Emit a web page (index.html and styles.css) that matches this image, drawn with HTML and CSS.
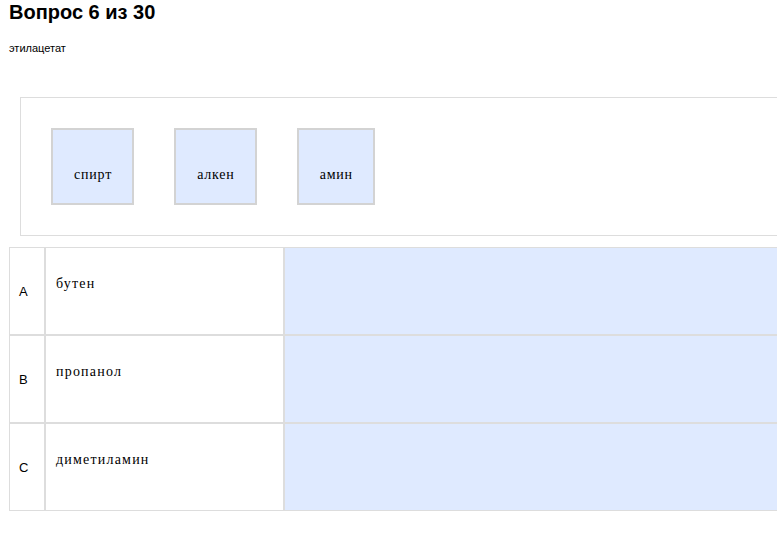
FILE: index.html
```html
<!DOCTYPE html>
<html lang="ru">
<head>
<meta charset="utf-8">
<title>Вопрос 6 из 30</title>
<link rel="stylesheet" href="styles.css">
</head>
<body>
<h1 class="title">Вопрос 6 из 30</h1>
<p class="question">этилацетат</p>

<div class="bank">
  <div class="chip">спирт</div>
  <div class="chip">алкен</div>
  <div class="chip">амин</div>
</div>

<div class="matching">
  <div class="cell key">A</div>
  <div class="cell label">бутен</div>
  <div class="cell drop"></div>

  <div class="cell key">B</div>
  <div class="cell label">пропанол</div>
  <div class="cell drop"></div>

  <div class="cell key">C</div>
  <div class="cell label">диметиламин</div>
  <div class="cell drop"></div>
</div>
</body>
</html>
```

FILE: styles.css
```css
html {
  overflow: hidden;
  background: #ffffff;
}

body {
  margin: 0 0 0 8px;
  font-family: "Liberation Sans", Arial, sans-serif;
  color: #000000;
}

.title {
  margin: 0 0 0 1px;
  font-size: 20px;
  line-height: 24px;
  font-weight: bold;
}

.question {
  margin: 18px 0 0 1px;
  font-size: 11px;
  line-height: 13px;
}

.bank {
  margin: 42px 0 0 12px;
  width: 820px;
  border: 1px solid #dddddd;
  border-right: none;
  padding: 30px;
  display: flex;
  gap: 40px;
  align-items: flex-start;
}

.chip {
  border: 2px solid #d3d3d3;
  background: #dfeaff;
  padding: 36px 20px 20px 21px;
  font-family: "Liberation Serif", "Times New Roman", serif;
  font-size: 14px;
  line-height: 17px;
  letter-spacing: 0.8px;
}

.matching {
  margin: 11px 0 0 1px;
  width: 900px;
  display: grid;
  grid-template-columns: 34px 237px 1fr;
  grid-auto-rows: 86px;
  gap: 2px;
  background: #dddddd;
  border: 1px solid #dddddd;
}

.cell {
  background: #ffffff;
}

.key {
  display: flex;
  align-items: center;
  padding-left: 9px;
  padding-top: 1px;
  font-size: 13px;
}

.label {
  padding: 27px 10px 0 10px;
  font-family: "Liberation Serif", "Times New Roman", serif;
  font-size: 14px;
  line-height: 17px;
  letter-spacing: 1.2px;
}

.drop {
  background: #dfeaff;
}
```
